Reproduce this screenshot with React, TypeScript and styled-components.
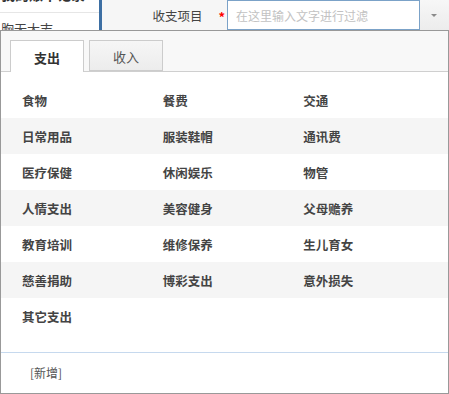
import React from "react";
import styled, { createGlobalStyle } from "styled-components";

const Global = createGlobalStyle`
  html, body { margin: 0; padding: 0; background: #fff; overflow: hidden; }
  body { font-family: "Noto Sans CJK SC", "Liberation Sans", sans-serif; font-size: 12px; color: #444; }
  * { box-sizing: border-box; }
`;

const Page = styled.div`
  position: relative;
  width: 449px;
  height: 394px;
  display: flex;
  overflow: hidden;
`;

const SidePanel = styled.div`
  width: 99px;
  background: #fff;
  display: flex;
  flex-direction: column;
`;

const SideHeadRow = styled.div`
  height: 13px;
  border-bottom: 1px solid #e6e6e6;
  display: flex;
  align-items: flex-end;
  overflow: hidden;
  padding-left: 1px;
`;

const SideHeadText = styled.span`
  font-weight: 700;
  font-size: 14px;
  line-height: 16px;
  margin-bottom: 10px;
  color: #333;
  white-space: nowrap;
`;

const SideRow = styled.div`
  padding: 7px 0 0 1px;
  font-size: 13px;
  line-height: 18px;
  color: #444;
  white-space: nowrap;
`;

const Divider = styled.div`
  width: 3px;
  background: #3d6fa3;
`;

const FormArea = styled.div`
  flex: 1;
  background: #f6f6f6;
`;

const FieldRow = styled.div`
  height: 30px;
  display: flex;
  align-items: stretch;
  justify-content: flex-end;
`;

const Label = styled.label`
  display: flex;
  align-items: center;
  font-size: 12.5px;
  color: #444;
  margin-right: 16px;
  padding-top: 1px;
`;

const Required = styled.span`
  color: #ff0000;
  font-weight: 700;
  font-size: 13px;
  margin-right: 2px;
  padding-top: 2px;
  display: flex;
  align-items: center;
`;

const FilterInput = styled.div`
  width: 193px;
  border: 1px solid #7ba2c8;
  background: #fff;
  display: flex;
  align-items: center;
  padding-left: 8px;
  color: #c2c2c2;
  font-size: 12px;
  padding-top: 1px;
`;

const DropButton = styled.div`
  width: 29px;
  background: linear-gradient(#f7f7f7, #ececec);
  display: flex;
  align-items: center;
  justify-content: center;
  padding-right: 2px;
`;

const Caret = styled.span`
  width: 0;
  height: 0;
  border-left: 3px solid transparent;
  border-right: 3px solid transparent;
  border-top: 3px solid #8a8a8a;
`;

const Dropdown = styled.div`
  position: absolute;
  top: 30px;
  left: 0;
  width: 449px;
  height: 364px;
  border: 1px solid #999;
  background: #fff;
  display: flex;
  flex-direction: column;
`;

const TabBar = styled.div`
  height: 41px;
  background: #f8f8f8;
  border-bottom: 1px solid #cfcfcf;
  padding: 9px 0 0 9px;
  display: flex;
  gap: 5px;
`;

const Tab = styled.div<{ $active?: boolean }>`
  width: 74px;
  height: ${(p) => (p.$active ? "32px" : "31px")};
  border: 1px solid #cccccc;
  border-bottom: ${(p) => (p.$active ? "none" : "1px solid #cccccc")};
  background: ${(p) => (p.$active ? "#fff" : "linear-gradient(#f6f6f6, #ececec)")};
  display: flex;
  align-items: center;
  justify-content: center;
  font-size: 13px;
  font-weight: ${(p) => (p.$active ? 700 : 400)};
  color: ${(p) => (p.$active ? "#333" : "#555")};
  padding-top: 1px;
  position: relative;
  z-index: 1;
`;

const List = styled.div`
  padding: 10px 0 18px 0;
`;

const Row = styled.div<{ $shade?: boolean }>`
  height: 36px;
  display: grid;
  grid-template-columns: repeat(3, 1fr);
  align-items: center;
  padding: 0 4px 0 21px;
  background: ${(p) => (p.$shade ? "#f5f5f5" : "#fff")};
`;

const Item = styled.span`
  font-weight: 700;
  font-size: 12.5px;
  color: #444;
  white-space: nowrap;
`;

const Footer = styled.div`
  flex: 1;
  border-top: 1px solid #c6d9ee;
  display: flex;
  align-items: center;
  padding-left: 29px;
  padding-bottom: 1px;
`;

const AddLink = styled.span`
  font-size: 12px;
  color: #555;
`;

const rows: string[][] = [
  ["食物", "餐费", "交通"],
  ["日常用品", "服装鞋帽", "通讯费"],
  ["医疗保健", "休闲娱乐", "物管"],
  ["人情支出", "美容健身", "父母赡养"],
  ["教育培训", "维修保养", "生儿育女"],
  ["慈善捐助", "博彩支出", "意外损失"],
  ["其它支出"],
];

export default function App() {
  return (
    <>
      <Global />
      <Page>
        <SidePanel>
          <SideHeadRow>
            <SideHeadText>我的账本记录</SideHeadText>
          </SideHeadRow>
          <SideRow>胸无大志</SideRow>
        </SidePanel>
        <Divider />
        <FormArea>
          <FieldRow>
            <Label>收支项目</Label>
            <Required>*</Required>
            <FilterInput>在这里输入文字进行过滤</FilterInput>
            <DropButton>
              <Caret />
            </DropButton>
          </FieldRow>
        </FormArea>
        <Dropdown>
          <TabBar>
            <Tab $active>支出</Tab>
            <Tab>收入</Tab>
          </TabBar>
          <List>
            {rows.map((r, i) => (
              <Row key={i} $shade={i % 2 === 1}>
                {r.map((t) => (
                  <Item key={t}>{t}</Item>
                ))}
              </Row>
            ))}
          </List>
          <Footer>
            <AddLink>[新增]</AddLink>
          </Footer>
        </Dropdown>
      </Page>
    </>
  );
}
